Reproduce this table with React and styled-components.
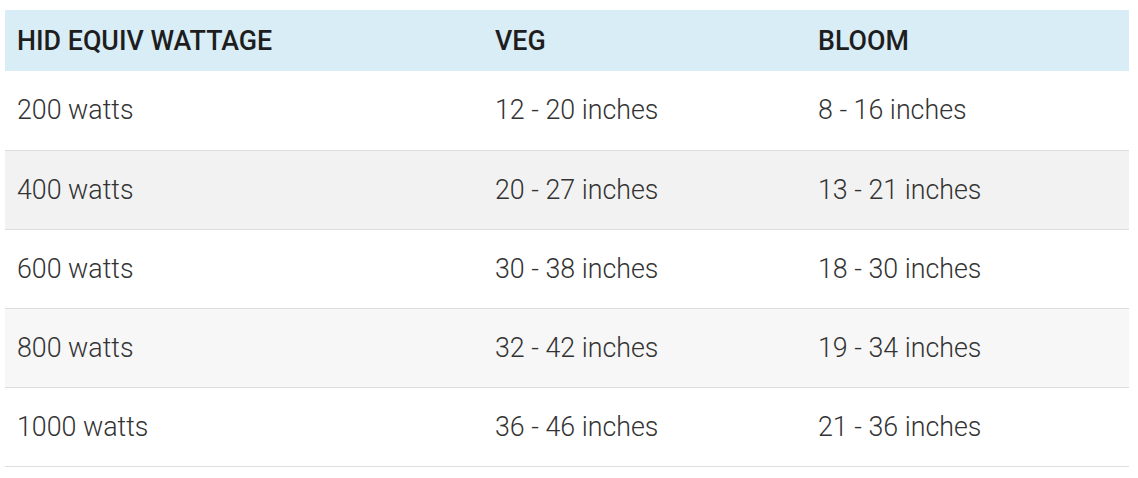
import React from "react";
import styled, { createGlobalStyle } from "styled-components";

const Global = createGlobalStyle`
  html, body { margin: 0; padding: 0; background: #fff; }
  body { font-family: Roboto, "Liberation Sans", sans-serif; }
`;

const Wrap = styled.div`
  padding: 10px 9px 0 5px;
`;

const Table = styled.table`
  width: 1124px;
  border-collapse: collapse;
  font-family: Roboto, "Liberation Sans", sans-serif;
  font-size: 26.8px;
`;

const HeadCell = styled.th`
  background: #d9edf7;
  color: #1e1e1e;
  font-weight: 500;
  text-align: left;
  height: 61px;
  padding: 0 12px;
  box-sizing: border-box;
  vertical-align: middle;
  width: ${(p) => p.$w}px;
`;

const Row = styled.tr`
  background: ${(p) => p.$bg};
  border-bottom: 1px solid #dddddd;
`;

const Cell = styled.td`
  color: #333;
  font-weight: 300;
  height: 79px;
  padding: 0 12px;
  box-sizing: border-box;
  vertical-align: middle;
`;

const rows = [
  ["200 watts", "12 - 20 inches", "8 - 16 inches"],
  ["400 watts", "20 - 27 inches", "13 - 21 inches"],
  ["600 watts", "30 - 38 inches", "18 - 30 inches"],
  ["800 watts", "32 - 42 inches", "19 - 34 inches"],
  ["1000 watts", "36 - 46 inches", "21 - 36 inches"],
];

const bgs = ["#ffffff", "#f2f2f2", "#ffffff", "#f7f7f7", "#ffffff"];

export default function App() {
  return (
    <>
      <Global />
      <Wrap>
        <Table>
          <thead>
            <tr>
              <HeadCell $w={478}>HID EQUIV WATTAGE</HeadCell>
              <HeadCell $w={323}>VEG</HeadCell>
              <HeadCell $w={323}>BLOOM</HeadCell>
            </tr>
          </thead>
          <tbody>
            {rows.map((r, i) => (
              <Row key={i} $bg={bgs[i]}>
                {r.map((c, j) => (
                  <Cell key={j}>{c}</Cell>
                ))}
              </Row>
            ))}
          </tbody>
        </Table>
      </Wrap>
    </>
  );
}
